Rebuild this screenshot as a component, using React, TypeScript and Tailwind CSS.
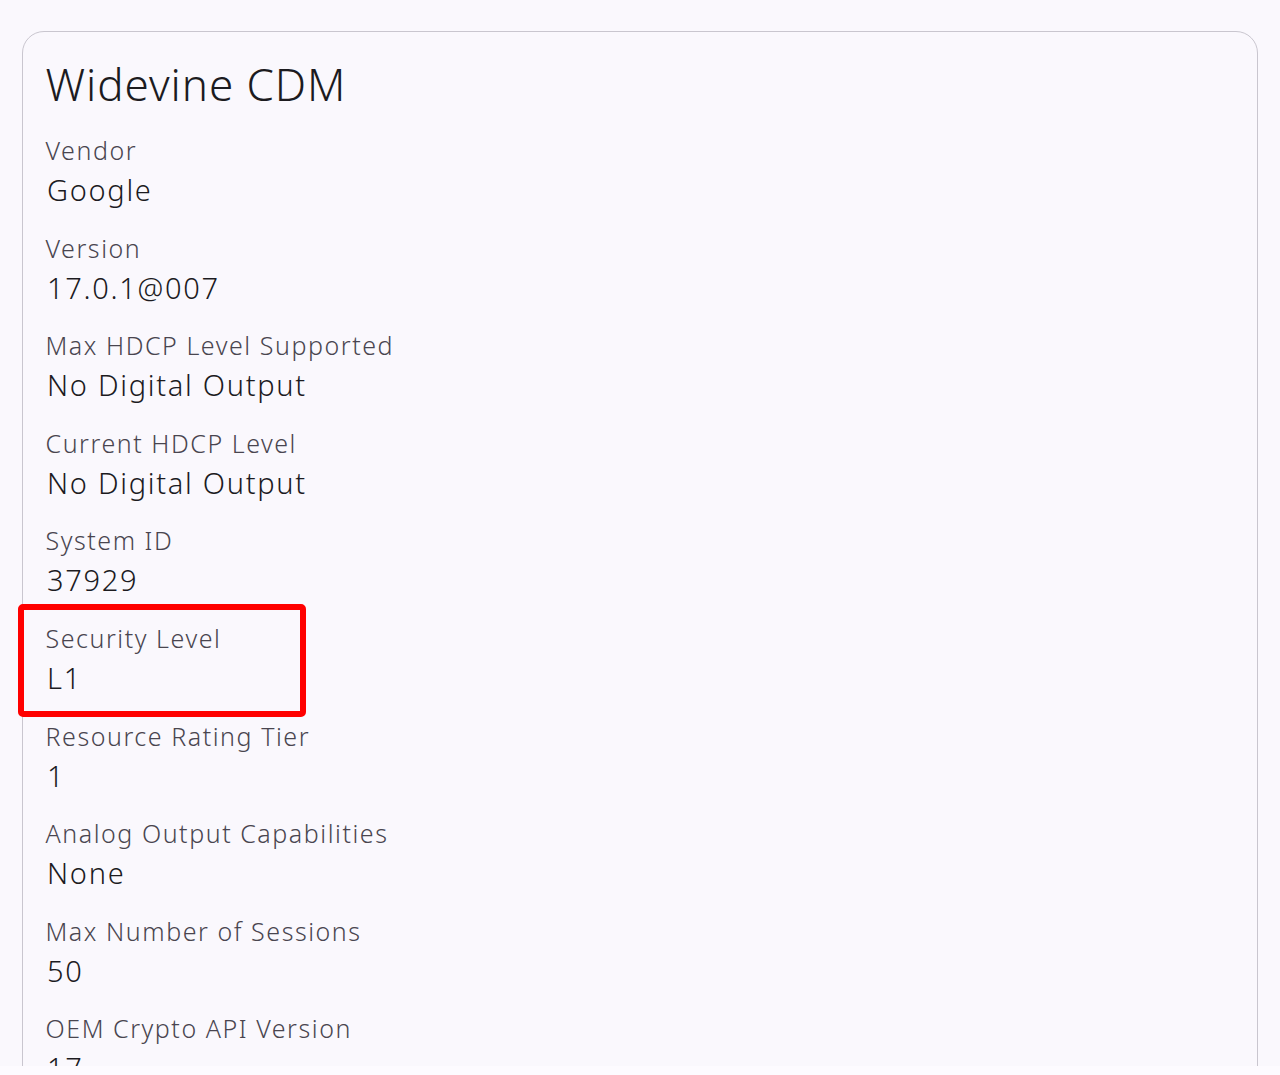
import React from "react";

const rows: [string, string][] = [
  ["Vendor", "Google"],
  ["Version", "17.0.1@007"],
  ["Max HDCP Level Supported", "No Digital Output"],
  ["Current HDCP Level", "No Digital Output"],
  ["System ID", "37929"],
  ["Security Level", "L1"],
  ["Resource Rating Tier", "1"],
  ["Analog Output Capabilities", "None"],
  ["Max Number of Sessions", "50"],
  ["OEM Crypto API Version", "17"],
];

export default function App() {
  return (
    <div
      className="w-[1280px] h-[1075px] bg-[#fdfbff] overflow-hidden"
      style={{ fontFamily: '"Noto Sans", "Open Sans", sans-serif' }}
    >
      <div className="h-[1066px] overflow-hidden bg-[#faf8fd] pt-[31px] px-[22px]">
        <div className="rounded-[22px] border-[1.5px] border-[#c9c6cf] bg-[#faf8fd] pl-[22.5px] pt-[22px] pb-10 min-h-[1200px]">
          <h1 className="text-[44px] leading-[60px] font-light text-[#1c1b1f] tracking-[0.95px]">Widevine CDM</h1>
          <div className="mt-[17px] flex flex-col gap-[18.6px]">
            {rows.map(([label, value]) => {
              const highlighted = label === "Security Level";
              return (
                <div key={label} className="relative flex flex-col">
                  {highlighted && (
                    <div className="absolute left-[-28px] top-[-15px] w-[288px] h-[113px] border-[6px] border-[#ff0000] rounded-[5px]" />
                  )}
                  <div className="text-[25px] leading-[38px] font-light text-[#49454f] tracking-[1.55px]">{label}</div>
                  <div className="text-[29px] leading-[41px] font-light text-[#1c1b1f] tracking-[1.7px] pl-[1.5px]">{value}</div>
                </div>
              );
            })}
          </div>
        </div>
      </div>
    </div>
  );
}
